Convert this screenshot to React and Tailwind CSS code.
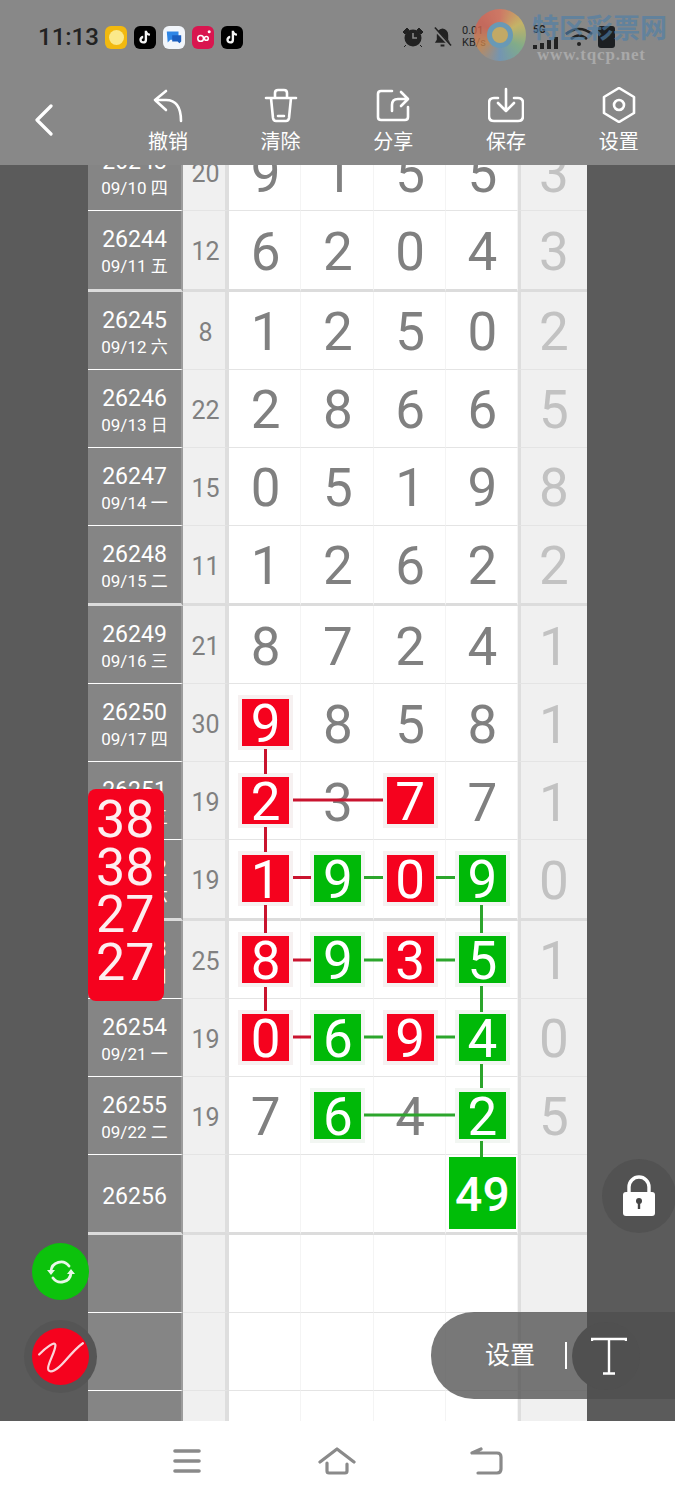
import React from 'react';

const rows = [
  { id: '26243', date: '09/10 四', sum: '20', n: ['9', '1', '5', '5'], last: '3' },
  { id: '26244', date: '09/11 五', sum: '12', n: ['6', '2', '0', '4'], last: '3', end: true },
  { id: '26245', date: '09/12 六', sum: '8', n: ['1', '2', '5', '0'], last: '2' },
  { id: '26246', date: '09/13 日', sum: '22', n: ['2', '8', '6', '6'], last: '5' },
  { id: '26247', date: '09/14 一', sum: '15', n: ['0', '5', '1', '9'], last: '8' },
  { id: '26248', date: '09/15 二', sum: '11', n: ['1', '2', '6', '2'], last: '2', end: true },
  { id: '26249', date: '09/16 三', sum: '21', n: ['8', '7', '2', '4'], last: '1' },
  { id: '26250', date: '09/17 四', sum: '30', n: ['9r', '8', '5', '8'], last: '1' },
  { id: '26251', date: '09/18 五', sum: '19', n: ['2r', '3', '7r', '7'], last: '1' },
  { id: '26252', date: '09/19 六', sum: '19', n: ['1r', '9g', '0r', '9g'], last: '0', end: true },
  { id: '26253', date: '09/20 日', sum: '25', n: ['8r', '9g', '3r', '5g'], last: '1' },
  { id: '26254', date: '09/21 一', sum: '19', n: ['0r', '6g', '9r', '4g'], last: '0' },
  { id: '26255', date: '09/22 二', sum: '19', n: ['7', '6g', '4', '2g'], last: '5' },
  { id: '26256', date: '', sum: '', n: ['', '', '', '49G'], last: '', end: true },
  { id: '', date: '', sum: '', n: ['', '', '', ''], last: '' },
  { id: '', date: '', sum: '', n: ['', '', '', ''], last: '' },
  { id: '', date: '', sum: '', n: ['', '', '', ''], last: '' },
];

function Num({ v }) {
  if (!v) return null;
  const k = v.slice(-1);
  if (k === 'r')
    return <span className="flex h-[47px] w-[47px] items-center justify-center bg-[#f5021e] pt-[4px] text-white shadow-[0_0_0_4px_#f6f1f1]">{v[0]}</span>;
  if (k === 'g')
    return <span className="flex h-[47px] w-[47px] items-center justify-center bg-[#00b908] pt-[4px] text-white shadow-[0_0_0_4px_#f2f6f2]">{v[0]}</span>;
  if (k === 'G')
    return <span className="flex h-[72px] w-[67px] items-center justify-center bg-[#00bd08] pt-[4px] text-[48px] font-medium text-white">{v.slice(0, -1)}</span>;
  return <span className="pt-[5px]">{v}</span>;
}

function Row({ r }) {
  const line = r.end ? 'border-b-[3px] border-[#dcdcdc]' : 'border-b border-[#e4e4e4]';
  return (
    <div className={r.end ? 'grid h-[80.5px] grid-cols-[95px_46px_repeat(4,72.25px)_69px]' : 'grid h-[78px] grid-cols-[95px_46px_repeat(4,72.25px)_69px]'}>
      <div className={r.end ? 'flex min-h-0 flex-col items-center justify-center border-r-2 border-b-[3px] border-r-[#9c9c9c] border-b-[#dcdcdc] bg-[#858585] pt-[7px] text-white' : 'flex min-h-0 flex-col items-center justify-center border-r-2 border-b border-r-[#9c9c9c] border-b-white bg-[#858585] pt-[7px] text-white'}>
        {r.id && <div className="text-[23px] leading-[26px]">{r.id}</div>}
        {r.date && <div className="text-[17px] leading-[26px]">{r.date}</div>}
      </div>
      <div className={`flex min-h-0 items-center justify-center border-r-4 border-r-[#dedede] bg-[#f0f0f0] pl-[3px] pt-[4px] text-[25px] leading-none text-[#808080] ${line}`}>{r.sum}</div>
      {r.n.map((v, i) => (
        <div key={i} className={`flex min-h-0 items-center justify-center border-r border-r-[#f4f4f4] bg-white pl-[2px] text-[53px] leading-none text-[#808080] ${line}`}>
          <Num v={v} />
        </div>
      ))}
      <div className={`flex min-h-0 items-center justify-center border-l-[3px] border-l-[#dedede] bg-[#f0f0f0] pt-[5px] text-[53px] leading-none text-[#c2c2c2] ${line}`}>{r.last}</div>
    </div>
  );
}

const red = '#c9142f';
const green = '#2ca52c';
const links = [
  [265.5, 749, 265.5, 774, red], [265.5, 827, 265.5, 852, red], [265.5, 905, 265.5, 933, red], [265.5, 987, 265.5, 1011, red],
  [293, 800, 383, 800, red],
  [293, 877.5, 311, 877.5, red], [364, 877.5, 383, 877.5, green], [436, 877.5, 455, 877.5, green],
  [293, 960, 311, 960, red], [364, 960, 383, 960, green], [436, 960, 455, 960, green],
  [293, 1037, 311, 1037, red], [364, 1037, 383, 1037, green], [436, 1037, 455, 1037, green],
  [364, 1115, 455, 1115, green],
  [481.5, 905, 481.5, 933, green], [481.5, 986, 481.5, 1012, green], [481.5, 1064, 481.5, 1088, green], [481.5, 1141, 481.5, 1157, green],
];

const tools = [
  { label: '撤销', d: 'M16 4 L5 13 L16 23 M5 13 H16 C26 13 31 20 31 34' },
  { label: '清除', d: 'M3 11 H33 M12 11 V6 Q12 3 15 3 H21 Q24 3 24 6 V11 M8 11 L10 31 Q10.5 34 13 34 H23 Q25.5 34 26 31 L28 11 M15 29 H21' },
  { label: '分享', d: 'M17 4 H6 Q3 4 3 7 V30 Q3 33 6 33 H30 Q33 33 33 30 V20 M17 24 V18 Q17 12 23 12 H32 M26 5 L33 12 L26 19' },
  { label: '保存', d: 'M10 11 H6 Q1 11 1 16 V29 Q1 34 6 34 H30 Q35 34 35 29 V16 Q35 11 30 11 H26 M18 2 V24 M10 16 L18 24 L26 16' },
  { label: '设置', d: 'M18 1 L33 10 V26 L18 35 L3 26 V10 Z M18 13 A5 5 0 1 0 18 23 A5 5 0 1 0 18 13 Z' },
];

function AppIcon({ bg, children }) {
  return <div className={`flex h-[23px] w-[22px] items-center justify-center rounded-[6px] ${bg}`}>{children}</div>;
}

const Tok = () => (
  <svg viewBox="0 0 20 20" className="h-[18px] w-[18px]">
    <path d="M11 3 V13 A3 3 0 1 1 8 10" fill="none" stroke="#f4f4f4" strokeWidth="2.6" />
    <path d="M11 4 Q12 7 15.5 7.5" fill="none" stroke="#f4f4f4" strokeWidth="2.4" />
  </svg>
);

export default function App() {
  return (
    <div className="relative flex h-[1500px] w-[675px] flex-col overflow-hidden bg-white font-['Roboto','Noto_Sans_CJK_SC',sans-serif]">
      <header className="h-[165px] shrink-0 bg-[#888888]">
        <div className="flex h-[74px] items-center pl-[38px] pr-[60px]">
          <span className="w-[67px] text-[24px] font-medium text-[#222222]">11:13</span>
          <div className="flex items-center gap-[7px]">
            <AppIcon bg="bg-[#f2b90f]"><span className="h-[15px] w-[15px] rounded-full bg-[#fbe98a]" /></AppIcon>
            <AppIcon bg="bg-black"><Tok /></AppIcon>
            <AppIcon bg="bg-[#f2f6fb]">
              <svg viewBox="0 0 20 20" className="h-[18px] w-[18px]"><path d="M2 4 H15 V13 H6 L3 16 Z" fill="#2e86e6" /><path d="M8 8 H18 V15 L16 17 L14 15 H8 Z" fill="#1b5fc0" /></svg>
            </AppIcon>
            <AppIcon bg="bg-[#d9164f]">
              <svg viewBox="0 0 20 20" className="h-[19px] w-[19px]"><circle cx="7" cy="11" r="3" fill="none" stroke="#fff" strokeWidth="1.6" /><circle cx="13" cy="11" r="2" fill="none" stroke="#fff" strokeWidth="1.6" /><circle cx="16" cy="4" r="1.6" fill="#fff" /></svg>
            </AppIcon>
            <AppIcon bg="bg-black"><Tok /></AppIcon>
          </div>
          <div className="ml-auto flex items-center">
            <svg viewBox="0 0 22 22" className="h-[22px] w-[22px]" fill="#222">
              <circle cx="11" cy="12" r="8.5" /><path d="M1 6 L5 2 L7 4 L3 8 Z M21 6 L17 2 L15 4 L19 8 Z M4 19 L2 21 M18 19 L20 21" stroke="#222" />
              <path d="M11 7 V12 H15" stroke="#888" strokeWidth="1.6" fill="none" />
            </svg>
            <svg viewBox="0 0 20 22" className="ml-[9px] h-[22px] w-[19px]" fill="#222">
              <path d="M10 2 Q4 3 4 9 V14 L2 17 H18 L16 14 V9 Q16 3 10 2 Z M8 19 H12 V21 H8 Z" />
              <path d="M1 2 L18 20" stroke="#888" strokeWidth="3" /><path d="M2 1 L19 20" stroke="#222" strokeWidth="1.6" />
            </svg>
            <div className="ml-[10px] w-[30px] text-[11px] leading-[12px] text-[#222222]">0.01<br />KB/s</div>
            <div className="ml-[41px] flex flex-col items-start">
              <span className="text-[10px] leading-[10px] font-bold text-[#222222]">5G</span>
              <div className="mt-[2px] flex items-end gap-[3px]">
                <span className="h-[4px] w-[4px] bg-[#222222]" /><span className="h-[6px] w-[4px] bg-[#222222]" /><span className="h-[9px] w-[4px] bg-[#222222]" /><span className="h-[12px] w-[4px] bg-[#222222]" />
              </div>
            </div>
            <svg viewBox="0 0 30 22" className="ml-[6px] h-[22px] w-[30px]" fill="none" stroke="#222" strokeWidth="2.6">
              <path d="M2 8 Q15 -2 28 8 M7 13 Q15 6 23 13" /><circle cx="15" cy="18" r="2" fill="#222" stroke="none" />
            </svg>
            <div className="ml-[4px] h-[22px] w-[17px] rounded-[3px] bg-[#1c1f22]" />
          </div>
        </div>
        <div className="flex h-[91px]">
          <div className="flex w-[111.6px] items-center pl-[34px]">
            <svg viewBox="0 0 20 32" className="h-[32px] w-[20px]" fill="none" stroke="#fff" strokeWidth="3.2" strokeLinecap="round" strokeLinejoin="round"><path d="M17 2 L3 16 L17 30" /></svg>
          </div>
          {tools.map((t) => (
            <div key={t.label} className="flex w-[112.75px] flex-col items-center pt-[13px]">
              <svg viewBox="0 0 36 36" className="h-[36px] w-[36px]" fill="none" stroke="#fff" strokeWidth="2.6" strokeLinecap="round" strokeLinejoin="round"><path d={t.d} /></svg>
              <span className="mt-[7px] text-[20px] leading-[24px] text-white">{t.label}</span>
            </div>
          ))}
        </div>
      </header>

      <main className="flex min-h-0 flex-1 overflow-hidden bg-[#5b5b5b]">
        <div className="w-[88px] shrink-0" />
        <div className="relative w-[499px] shrink-0 overflow-hidden">
          <div className="mt-[-32px]">
            {rows.map((r, i) => <Row key={i} r={r} />)}
          </div>
          <svg viewBox="88 165 499 1256" className="absolute inset-0 h-full w-full">
            {links.map(([x1, y1, x2, y2, c], i) => (
              <line key={i} x1={x1} y1={y1} x2={x2} y2={y2} stroke={c} strokeWidth="3" />
            ))}
          </svg>
        </div>
      </main>

      <nav className="flex h-[79px] shrink-0 items-center bg-white pl-[172px]">
        <svg viewBox="0 0 30 26" className="h-[26px] w-[30px]" fill="none" stroke="#8a8a8a" strokeWidth="3.6" strokeLinecap="round"><path d="M3 3 H27 M3 13 H27 M3 23 H27" /></svg>
        <svg viewBox="0 0 38 28" className="ml-[116px] h-[28px] w-[38px]" fill="none" stroke="#8a8a8a" strokeWidth="3.2" strokeLinecap="round" strokeLinejoin="round"><path d="M2 15 L19 2 L36 15 M9 16 V24 Q9 26 11 26 H27 Q29 26 29 24 V17" /></svg>
        <svg viewBox="0 0 34 28" className="ml-[113px] h-[28px] w-[34px]" fill="none" stroke="#8a8a8a" strokeWidth="3.2" strokeLinecap="round" strokeLinejoin="round"><path d="M12 2 L3 6 H28 Q32 6 32 10 V22 Q32 26 28 26 H9" /></svg>
      </nav>

      {/* watermark */}
      <div className="absolute left-[474px] top-[9px] h-[52px] w-[52px] rounded-full bg-[conic-gradient(#e5735a,#d9c25c,#7fb88a,#6d9ac0,#cf8a4e,#d85f4e,#e5735a)] opacity-75">
        <div className="mx-auto mt-[13px] h-[26px] w-[26px] rounded-full border-[5px] border-[#5f9fc4] bg-[#d6b45a]" />
      </div>
      <div className="absolute left-[532px] top-[14px] text-[27px] leading-[30px] font-bold text-[#4f7fa8] opacity-65">特区彩票网</div>
      <div className="absolute left-[537px] top-[46px] font-['Liberation_Serif',serif] text-[17px] leading-[18px] font-bold tracking-[0.8px] text-[#a9a9a9]">www.tqcp.net</div>

      {/* red number badge */}
      <div className="absolute left-[88px] top-[789px] h-[212px] w-[76px] overflow-hidden rounded-[8px] bg-[#f5021e] pl-[8px] pt-[7px] text-[52px] leading-[47.5px] text-[#fdeef0]">
        <div>38</div><div>38</div><div>27</div><div>27</div>
      </div>

      {/* left floating buttons */}
      <div className="absolute left-[32px] top-[1243px] flex h-[57px] w-[57px] items-center justify-center rounded-full bg-[#0cc20c]">
        <svg viewBox="0 0 32 32" className="h-[32px] w-[32px]" fill="none" stroke="#e8f8e8" strokeWidth="2.8" strokeLinecap="round">
          <path d="M6 15 A10 10 0 0 1 24 10 M26 17 A10 10 0 0 1 8 22" />
          <path d="M2 14 L6 19 L10 14 Z M22 18 L26 13 L30 18 Z" fill="#e8f8e8" stroke="none" />
        </svg>
      </div>
      <div className="absolute left-[24px] top-[1320px] flex h-[73px] w-[73px] items-center justify-center rounded-full bg-[#555555]">
        <div className="h-[57px] w-[57px] rounded-full bg-[#f5021e]">
          <svg viewBox="0 0 56 56" className="h-[57px] w-[57px]" fill="none" stroke="#fbd5da" strokeWidth="2.2" strokeLinecap="round">
            <path d="M7 26 C13 20 23 12 23 17 C23 24 14 37 16 41 C18 45 25 41 32 33 C38 26 44 19 50 15" />
          </svg>
        </div>
      </div>

      {/* lock */}
      <div className="absolute left-[602px] top-[1159px] flex h-[74px] w-[74px] items-center justify-center rounded-full bg-[#525252]">
        <svg viewBox="0 0 36 42" className="h-[42px] w-[36px]">
          <path d="M8 18 V12 A10 10 0 0 1 28 12 V18" fill="none" stroke="#fff" strokeWidth="3.4" />
          <rect x="2" y="17" width="32" height="24" rx="3" fill="#fff" />
          <circle cx="18" cy="26" r="3" fill="#444" /><rect x="16.8" y="27" width="2.4" height="7" fill="#444" />
        </svg>
      </div>

      {/* settings pill */}
      <div className="absolute left-[431px] top-[1312px] flex h-[87px] w-[244px] items-center rounded-l-[43px] bg-[rgba(77,77,77,0.76)]">
        <span className="ml-[54px] w-[50px] text-[25px] leading-[30px] text-white">设置</span>
        <span className="ml-[30px] h-[27px] w-[2px] bg-white" />
        <div className="ml-[5px] flex h-[68px] w-[68px] items-center justify-center rounded-full bg-[#505050] pl-[6px]">
          <svg viewBox="0 0 36 38" className="h-[38px] w-[36px]" fill="none" stroke="#fff" strokeWidth="2.4"><path d="M1 4 V2 H35 V4 M18 2 V36 M12 36.5 H24" /></svg>
        </div>
      </div>
    </div>
  );
}
